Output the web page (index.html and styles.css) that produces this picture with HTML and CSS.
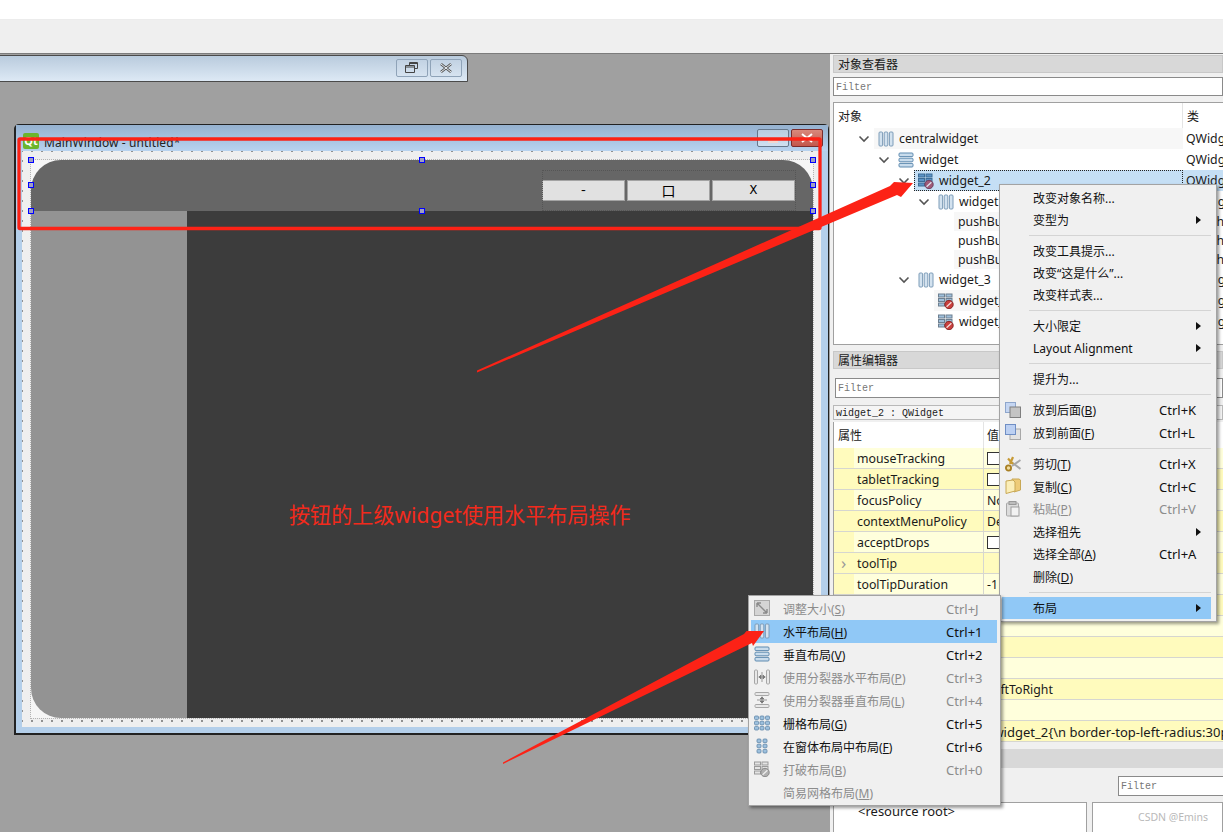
FILE: index.html
```html
<!DOCTYPE html>
<html lang="zh-CN">
<head>
    <meta charset="UTF-8">
    <title>Qt Designer</title>
    <link rel="stylesheet" href="styles.css">
</head>
<body>
    <svg class="icon-defs" width="0" height="0">
        <defs>
            <symbol id="i-hbox" viewBox="0 0 16 16">
                <rect x="1" y="1" width="3.6" height="14" rx="1" fill="#d3e2ef" stroke="#7d9cb8"/>
                <rect x="6.2" y="1" width="3.6" height="14" rx="1" fill="#d3e2ef" stroke="#7d9cb8"/>
                <rect x="11.4" y="1" width="3.6" height="14" rx="1" fill="#d3e2ef" stroke="#7d9cb8"/>
            </symbol>
            <symbol id="i-vbox" viewBox="0 0 16 16">
                <rect x="1" y="1" width="14" height="3.6" rx="1" fill="#c9dcec" stroke="#5f8bb0"/>
                <rect x="1" y="6.2" width="14" height="3.6" rx="1" fill="#c9dcec" stroke="#5f8bb0"/>
                <rect x="1" y="11.4" width="14" height="3.6" rx="1" fill="#c9dcec" stroke="#5f8bb0"/>
            </symbol>
            <symbol id="i-broken" viewBox="0 0 16 16">
                <rect x="0.5" y="1" width="6" height="3" fill="#9fc0dc" stroke="#6d7f90"/>
                <rect x="8" y="1" width="6" height="3" fill="#9fc0dc" stroke="#6d7f90"/>
                <rect x="0.5" y="5.5" width="6" height="3" fill="#9fc0dc" stroke="#6d7f90"/>
                <rect x="8" y="5.5" width="6" height="3" fill="#9fc0dc" stroke="#6d7f90"/>
                <rect x="0.5" y="10" width="6" height="3" fill="#9fc0dc" stroke="#6d7f90"/>
                <circle cx="11" cy="11.5" r="4.2" fill="#c9403e" stroke="#8a2626"/>
                <path d="M8.6 13.8 13.4 9.2" stroke="#f4dede" stroke-width="1.2"/>
            </symbol>
            <symbol id="i-broken-sel" viewBox="0 0 16 16">
                <rect x="0.5" y="1" width="6" height="3" fill="#5c93c6" stroke="#3d6c96"/>
                <rect x="8" y="1" width="6" height="3" fill="#5c93c6" stroke="#3d6c96"/>
                <rect x="0.5" y="5.5" width="6" height="3" fill="#5c93c6" stroke="#3d6c96"/>
                <rect x="8" y="5.5" width="6" height="3" fill="#5c93c6" stroke="#3d6c96"/>
                <rect x="0.5" y="10" width="6" height="3" fill="#5c93c6" stroke="#3d6c96"/>
                <circle cx="11" cy="11.5" r="4.2" fill="#a05a78" stroke="#6e4060"/>
                <path d="M8.6 13.8 13.4 9.2" stroke="#dfe6f2" stroke-width="1.2"/>
            </symbol>
            <symbol id="i-broken-off" viewBox="0 0 16 16">
                <rect x="0.5" y="1" width="6" height="3" fill="#e4e4e4" stroke="#9a9a9a"/>
                <rect x="8" y="1" width="6" height="3" fill="#e4e4e4" stroke="#9a9a9a"/>
                <rect x="0.5" y="5.5" width="6" height="3" fill="#e4e4e4" stroke="#9a9a9a"/>
                <rect x="8" y="5.5" width="6" height="3" fill="#e4e4e4" stroke="#9a9a9a"/>
                <rect x="0.5" y="10" width="6" height="3" fill="#e4e4e4" stroke="#9a9a9a"/>
                <circle cx="11" cy="11.5" r="4.2" fill="#b0b0b0" stroke="#8a8a8a"/>
                <path d="M8.6 13.8 13.4 9.2" stroke="#eeeeee" stroke-width="1.2"/>
            </symbol>
            <symbol id="i-adjust" viewBox="0 0 16 16">
                <rect x="0.5" y="0.5" width="15" height="15" fill="#d4d4d4" stroke="#a8a8a8"/>
                <path d="M3 3 13 13M3 3h4M3 3v4M13 13H9M13 13V9" fill="none" stroke="#8a8a8a" stroke-width="1.4"/>
            </symbol>
            <symbol id="i-hsplit" viewBox="0 0 16 16">
                <rect x="0.5" y="1" width="3" height="14" rx="1" fill="#e8e8e8" stroke="#a6a6a6"/>
                <rect x="12.5" y="1" width="3" height="14" rx="1" fill="#e8e8e8" stroke="#a6a6a6"/>
                <path d="M4.5 8h7M5 8l2-2v4zM11 8 9 6v4z" fill="#777" stroke="#777" stroke-width="0.8"/>
                <path d="M8 3v10" stroke="#999"/>
            </symbol>
            <symbol id="i-vsplit" viewBox="0 0 16 16">
                <rect x="1" y="0.5" width="14" height="3" rx="1" fill="#e8e8e8" stroke="#a6a6a6"/>
                <rect x="1" y="12.5" width="14" height="3" rx="1" fill="#e8e8e8" stroke="#a6a6a6"/>
                <path d="M8 4.5v7M8 5 6 7h4zM8 11 6 9h4z" fill="#777" stroke="#777" stroke-width="0.8"/>
                <path d="M3 8h10" stroke="#999"/>
            </symbol>
            <symbol id="i-grid" viewBox="0 0 16 16">
                <g fill="#9dc0dd" stroke="#5f86a8" stroke-width="0.8">
                    <rect x="0.5" y="1" width="4" height="3.6" rx="1"/><rect x="6" y="1" width="4" height="3.6" rx="1"/><rect x="11.5" y="1" width="4" height="3.6" rx="1"/>
                    <rect x="0.5" y="6.2" width="4" height="3.6" rx="1"/><rect x="6" y="6.2" width="4" height="3.6" rx="1"/><rect x="11.5" y="6.2" width="4" height="3.6" rx="1"/>
                    <rect x="0.5" y="11.4" width="4" height="3.6" rx="1"/><rect x="6" y="11.4" width="4" height="3.6" rx="1"/><rect x="11.5" y="11.4" width="4" height="3.6" rx="1"/>
                </g>
            </symbol>
            <symbol id="i-form" viewBox="0 0 16 16">
                <g fill="#9dc0dd" stroke="#5f86a8" stroke-width="0.8">
                    <rect x="3" y="1" width="4" height="3.6" rx="1"/><rect x="9" y="1" width="4" height="3.6" rx="1"/>
                    <rect x="3" y="6.2" width="4" height="3.6" rx="1"/><rect x="9" y="6.2" width="4" height="3.6" rx="1"/>
                    <rect x="3" y="11.4" width="4" height="3.6" rx="1"/><rect x="9" y="11.4" width="4" height="3.6" rx="1"/>
                </g>
            </symbol>
            <symbol id="i-back" viewBox="0 0 16 16">
                <rect x="0.5" y="0.5" width="10" height="10" fill="#c5d6f2" stroke="#8ea6cc"/>
                <rect x="5" y="5" width="10.5" height="10.5" fill="#c4c4c4" stroke="#7f7f7f"/>
            </symbol>
            <symbol id="i-front" viewBox="0 0 16 16">
                <rect x="5" y="5" width="10.5" height="10.5" fill="#e2e2e2" stroke="#a8a8a8"/>
                <rect x="0.5" y="0.5" width="10" height="10" fill="#bcd0f2" stroke="#6f8ec4"/>
            </symbol>
            <symbol id="i-cut" viewBox="0 0 16 16">
                <path d="M15.500 13 7 6.500M15.500 4 7 10" stroke="#a8a8a8" stroke-width="2"/>
                <path d="M3 2.500 8 8M8 1 5 8" fill="none" stroke="#c79a35" stroke-width="2.200"/>
                <circle cx="3.500" cy="12" r="2.600" fill="#f0dca0" stroke="#a87f24" stroke-width="1.800"/>
            </symbol>
            <symbol id="i-copy" viewBox="0 0 16 16">
                <path d="M7 1h7l1.500 1v10L9 14z" fill="#eecb78" stroke="#c8a855"/>
                <path d="M1 3l7-1 2 2v9l-9 2.500z" fill="#fbeeb8" stroke="#c8a855"/>
            </symbol>
            <symbol id="i-paste" viewBox="0 0 16 16">
                <rect x="1.500" y="2" width="12" height="13" rx="1" fill="#dcdcdc" stroke="#a8a8a8"/>
                <rect x="4" y="0.500" width="7" height="3" fill="#bdbdbd" stroke="#999"/>
                <rect x="6" y="6" width="8" height="9" fill="#f2f2f2" stroke="#9d9d9d"/>
            </symbol>
            <symbol id="i-chevron" viewBox="0 0 12 12">
                <path d="M1.500 3.500 6 8l4.500-4.500" fill="none" stroke="#555" stroke-width="1.600"/>
            </symbol>
        </defs>
    </svg>

    <div class="top-white"></div>
    <div class="top-bar"></div>

    <div class="workspace">
        <div class="mdi">
            <!-- minimized subwindow -->
            <div class="mini-window">
                <button class="mini-btn">
                    <svg width="16" height="12" viewBox="0 0 16 12"><path d="M5.500 3.500v-3h8v6h-3M1.500 3.500h9v7h-9z" fill="none" stroke="#444"/><path d="M1.500 5h9M5.500 1.500h8" stroke="#444"/></svg>
                </button>
                <button class="mini-btn">
                    <svg width="14" height="10" viewBox="0 0 14 10"><path d="M2 1l10 8M12 1 2 9" stroke="#555" stroke-width="2.600"/><path d="M2 1l10 8M12 1 2 9" stroke="#eef2f6" stroke-width="1"/></svg>
                </button>
            </div>

            <!-- form window -->
            <div class="form-window">
                <div class="form-title">
                    <span class="qt-logo">Qt</span>
                    <span class="form-title-text">MainWindow - untitled*</span>
                    <span class="win-btn win-min"><i class="min-bar"></i></span>
                    <span class="win-btn win-close">
                        <svg width="14" height="10" viewBox="0 0 14 10"><path d="M2 1l10 8M12 1 2 9" stroke="#fff" stroke-width="2"/></svg>
                    </span>
                </div>
                <div class="form-body">
                    <div class="central">
                        <div class="widget-top">
                            <div class="button-row">
                                <button class="form-btn">-</button>
                                <button class="form-btn btn-square">口</button>
                                <button class="form-btn">X</button>
                            </div>
                        </div>
                        <div class="widget-bottom">
                            <div class="widget-left"></div>
                            <div class="widget-right"></div>
                        </div>
                    </div>
                </div>
            </div>
        </div>

        <div class="dock">
            <div class="dock-title">对象查看器</div>
            <div class="filter filter-wide">Filter</div>

            <div class="tree">
                <div class="tree-head">
                    <span class="tree-col-name">对象</span>
                    <span class="tree-col-class">类</span>
                </div>
                <div class="tree-row depth-0 alt">
                    <div class="tree-name"><svg class="chevron"><use href="#i-chevron"/></svg><div class="tree-item"><svg class="tree-icon"><use href="#i-hbox"/></svg>centralwidget</div></div>
                    <div class="tree-class">QWidget</div>
                </div>
                <div class="tree-row depth-1">
                    <div class="tree-name"><svg class="chevron"><use href="#i-chevron"/></svg><div class="tree-item"><svg class="tree-icon"><use href="#i-vbox"/></svg>widget</div></div>
                    <div class="tree-class">QWidget</div>
                </div>
                <div class="tree-row depth-2 selected">
                    <div class="tree-name"><svg class="chevron"><use href="#i-chevron"/></svg><div class="tree-item"><svg class="tree-icon"><use href="#i-broken-sel"/></svg>widget_2</div></div>
                    <div class="tree-class">QWidget</div>
                </div>
                <div class="tree-row depth-3">
                    <div class="tree-name"><svg class="chevron"><use href="#i-chevron"/></svg><div class="tree-item"><svg class="tree-icon"><use href="#i-hbox"/></svg>widget</div></div>
                    <div class="tree-class">QWidget</div>
                </div>
                <div class="tree-row depth-4 short alt">
                    <div class="tree-name"><div class="tree-item">pushButton</div></div>
                    <div class="tree-class">QPushButton</div>
                </div>
                <div class="tree-row depth-4 short">
                    <div class="tree-name"><div class="tree-item">pushButton_2</div></div>
                    <div class="tree-class">QPushButton</div>
                </div>
                <div class="tree-row depth-4 short alt">
                    <div class="tree-name"><div class="tree-item">pushButton_3</div></div>
                    <div class="tree-class">QPushButton</div>
                </div>
                <div class="tree-row depth-2">
                    <div class="tree-name"><svg class="chevron"><use href="#i-chevron"/></svg><div class="tree-item"><svg class="tree-icon"><use href="#i-hbox"/></svg>widget_3</div></div>
                    <div class="tree-class">QWidget</div>
                </div>
                <div class="tree-row depth-3 leaf alt">
                    <div class="tree-name"><div class="tree-item"><svg class="tree-icon"><use href="#i-broken"/></svg>widget_4</div></div>
                    <div class="tree-class">QWidget</div>
                </div>
                <div class="tree-row depth-3 leaf">
                    <div class="tree-name"><div class="tree-item"><svg class="tree-icon"><use href="#i-broken"/></svg>widget_5</div></div>
                    <div class="tree-class">QWidget</div>
                </div>
            </div>

            <div class="dock-title dock-title-props">属性编辑器</div>
            <div class="filter filter-props">Filter</div>
            <div class="class-label">widget_2 : QWidget</div>

            <div class="props">
                <div class="props-head"><span class="prop-name-head">属性</span><span class="prop-value">值</span></div>
                <div class="prop-row light"><span class="prop-name">mouseTracking</span><span class="prop-value"><i class="check"></i></span></div>
                <div class="prop-row"><span class="prop-name">tabletTracking</span><span class="prop-value"><i class="check"></i></span></div>
                <div class="prop-row light"><span class="prop-name">focusPolicy</span><span class="prop-value">NoFocus</span></div>
                <div class="prop-row"><span class="prop-name">contextMenuPolicy</span><span class="prop-value">DefaultContextMenu</span></div>
                <div class="prop-row light"><span class="prop-name">acceptDrops</span><span class="prop-value"><i class="check"></i></span></div>
                <div class="prop-row"><span class="prop-name"><b class="expander">›</b>toolTip</span><span class="prop-value"></span></div>
                <div class="prop-row light"><span class="prop-name">toolTipDuration</span><span class="prop-value">-1</span></div>
                <div class="prop-row"><span class="prop-name">statusTip</span><span class="prop-value"></span></div>
                <div class="prop-row light"><span class="prop-name">whatsThis</span><span class="prop-value"></span></div>
                <div class="prop-row"><span class="prop-name">accessibleName</span><span class="prop-value"></span></div>
                <div class="prop-row light"><span class="prop-name">accessibleDescription</span><span class="prop-value"></span></div>
                <div class="prop-row"><span class="prop-name">layoutDirection</span><span class="prop-value">LeftToRight</span></div>
                <div class="prop-row light"><span class="prop-name">autoFillBackground</span><span class="prop-value"></span></div>
                <div class="prop-row"><span class="prop-name">styleSheet</span><span class="prop-value prop-value-long">#widget_2{\n border-top-left-radius:30px;</span></div>
            </div>

            <div class="dock-title dock-title-res"></div>
            <div class="res-bar"><div class="filter filter-res">Filter</div></div>
            <div class="res-boxes">
                <div class="res-box res-left">&lt;resource root&gt;</div>
                <div class="res-box res-right"></div>
            </div>
        </div>
    </div>

    <!-- context menu -->
    <div class="menu menu-main">
        <div class="menu-item tight"><span class="menu-label">改变对象名称...</span></div>
        <div class="menu-item tight"><span class="menu-label">变型为</span><i class="menu-arrow"></i></div>
        <div class="menu-sep"></div>
        <div class="menu-item tight"><span class="menu-label">改变工具提示...</span></div>
        <div class="menu-item tight"><span class="menu-label">改变“这是什么”...</span></div>
        <div class="menu-item tight"><span class="menu-label">改变样式表...</span></div>
        <div class="menu-sep"></div>
        <div class="menu-item tight"><span class="menu-label">大小限定</span><i class="menu-arrow"></i></div>
        <div class="menu-item tight"><span class="menu-label">Layout Alignment</span><i class="menu-arrow"></i></div>
        <div class="menu-sep"></div>
        <div class="menu-item tight"><span class="menu-label">提升为...</span></div>
        <div class="menu-sep"></div>
        <div class="menu-item"><svg class="menu-icon"><use href="#i-back"/></svg><span class="menu-label">放到后面(<u>B</u>)</span><span class="menu-key">Ctrl+K</span></div>
        <div class="menu-item"><svg class="menu-icon"><use href="#i-front"/></svg><span class="menu-label">放到前面(<u>F</u>)</span><span class="menu-key">Ctrl+L</span></div>
        <div class="menu-sep"></div>
        <div class="menu-item"><svg class="menu-icon"><use href="#i-cut"/></svg><span class="menu-label">剪切(<u>T</u>)</span><span class="menu-key">Ctrl+X</span></div>
        <div class="menu-item"><svg class="menu-icon"><use href="#i-copy"/></svg><span class="menu-label">复制(<u>C</u>)</span><span class="menu-key">Ctrl+C</span></div>
        <div class="menu-item off"><svg class="menu-icon"><use href="#i-paste"/></svg><span class="menu-label">粘贴(<u>P</u>)</span><span class="menu-key">Ctrl+V</span></div>
        <div class="menu-item"><span class="menu-label">选择祖先</span><i class="menu-arrow"></i></div>
        <div class="menu-item"><span class="menu-label">选择全部(<u>A</u>)</span><span class="menu-key">Ctrl+A</span></div>
        <div class="menu-item"><span class="menu-label">删除(<u>D</u>)</span></div>
        <div class="menu-sep"></div>
        <div class="menu-item active"><span class="menu-label">布局</span><i class="menu-arrow"></i></div>
    </div>

    <!-- layout submenu -->
    <div class="menu menu-layout">
        <div class="menu-item off"><svg class="menu-icon"><use href="#i-adjust"/></svg><span class="menu-label">调整大小(<u>S</u>)</span><span class="menu-key">Ctrl+J</span></div>
        <div class="menu-item active"><svg class="menu-icon"><use href="#i-hbox"/></svg><span class="menu-label">水平布局(<u>H</u>)</span><span class="menu-key">Ctrl+1</span></div>
        <div class="menu-item"><svg class="menu-icon"><use href="#i-vbox"/></svg><span class="menu-label">垂直布局(<u>V</u>)</span><span class="menu-key">Ctrl+2</span></div>
        <div class="menu-item off"><svg class="menu-icon"><use href="#i-hsplit"/></svg><span class="menu-label">使用分裂器水平布局(<u>P</u>)</span><span class="menu-key">Ctrl+3</span></div>
        <div class="menu-item off"><svg class="menu-icon"><use href="#i-vsplit"/></svg><span class="menu-label">使用分裂器垂直布局(<u>L</u>)</span><span class="menu-key">Ctrl+4</span></div>
        <div class="menu-item"><svg class="menu-icon"><use href="#i-grid"/></svg><span class="menu-label">栅格布局(<u>G</u>)</span><span class="menu-key">Ctrl+5</span></div>
        <div class="menu-item"><svg class="menu-icon"><use href="#i-form"/></svg><span class="menu-label">在窗体布局中布局(<u>F</u>)</span><span class="menu-key">Ctrl+6</span></div>
        <div class="menu-item off"><svg class="menu-icon"><use href="#i-broken-off"/></svg><span class="menu-label">打破布局(<u>B</u>)</span><span class="menu-key">Ctrl+0</span></div>
        <div class="menu-item off"><span class="menu-label">简易网格布局(<u>M</u>)</span></div>
    </div>

    <!-- selection handles -->
    <i class="handle h-tl"></i><i class="handle h-tc"></i><i class="handle h-tr"></i>
    <i class="handle h-ml"></i><i class="handle h-mr"></i>
    <i class="handle h-bl"></i><i class="handle h-bc"></i><i class="handle h-br"></i>

    <!-- red annotations -->
    <svg class="annotations" width="1223" height="832" viewBox="0 0 1223 832">
        <rect x="19" y="139" width="801" height="89.500" rx="1" fill="none" stroke="#fc2216" stroke-width="3.300"/>
        <polygon points="477,370.500 890,186 894,182 913,183 901,197 897,195 477,372.500" fill="#fc2216"/>
        <polygon points="503,762.500 744,634 746.500,631 764,631 753,646 752,643 503,764" fill="#fc2216"/>
    </svg>
    <div class="note">按钮的上级widget使用水平布局操作</div>
    <div class="watermark">CSDN @Emins</div>
</body>
</html>
```
FILE: styles.css
```css
* {
    box-sizing: border-box;
}

body {
    margin: 0;
    width: 1223px;
    height: 832px;
    position: relative;
    overflow: hidden;
    background-color: #f0f0f0;
    color: #1a1a1a;
    font-family: "Noto Sans", "Noto Sans CJK SC", sans-serif;
    font-size: 12.3px;
}

.icon-defs {
    position: absolute;
}

.top-white {
    height: 20px;
    background-color: #fff;
    border-bottom: 1px solid #ececec;
}

.top-bar {
    height: 34px;
    background-color: #efefef;
    border-bottom: 1px solid #7c7c7c;
}

.workspace {
    display: flex;
    height: 778px;
}

/* left mdi area */
.mdi {
    width: 830px;
    position: relative;
    background-color: #a0a0a0;
}

.mini-window {
    position: absolute;
    left: -10px;
    top: 1px;
    width: 478px;
    height: 27px;
    display: flex;
    justify-content: flex-end;
    align-items: center;
    gap: 2px;
    padding: 0 5px 2px 0;
    background: linear-gradient(#b9cbdd, #dde9f5);
    border: 1px solid #4a4a4a;
    border-top-right-radius: 6px;
}

.mini-btn {
    width: 32px;
    height: 18px;
    padding: 0;
    display: flex;
    align-items: center;
    justify-content: center;
    background: linear-gradient(#c2d2e3, #d6e3f0);
    border: 1px solid #8fa3b8;
    border-radius: 2px;
}

.form-window {
    position: absolute;
    left: 14px;
    top: 70px;
    width: 815px;
    height: 611px;
    display: flex;
    flex-direction: column;
    background-color: #b4cfea;
    border: 1px solid #222;
    border-left-width: 2px;
    border-bottom-width: 2px;
    border-top-left-radius: 5px;
    border-top-right-radius: 5px;
    padding: 0 7px 6px 6px;
}

.form-title {
    height: 26px;
    margin: 0 -7px 0 -6px;
    padding: 0 5px 0 7px;
    display: flex;
    align-items: center;
    background: linear-gradient(#95b1cf, #b8d3ef);
}

.qt-logo {
    width: 16px;
    height: 16px;
    margin-top: 6px;
    background-color: #6cb52d;
    border-radius: 2px;
    color: #fff;
    font-size: 11px;
    font-weight: bold;
    line-height: 16px;
    text-align: center;
}

.form-title-text {
    flex: 1;
    margin: 9px 0 0 5px;
    color: #222;
    font-size: 12px;
    letter-spacing: 0.1px;
}

.win-btn {
    width: 32px;
    height: 18px;
    margin-left: 2px;
    margin-top: -1px;
    display: flex;
    align-items: center;
    justify-content: center;
    border: 1px solid #66788c;
    border-radius: 2px;
}

.win-min {
    background: linear-gradient(#b8cde2, #cfe0f0);
}

.min-bar {
    width: 10px;
    height: 4px;
    margin-top: 6px;
    background-color: #f0d8d0;
}

.win-close {
    background: linear-gradient(#d9897c, #c4574c);
    border-color: #7a2c2c;
}

.form-body {
    flex: 1;
    padding: 9px 8px 9px 9px;
    background-color: #efefef;
    background-image: radial-gradient(#8e8e8e 0.7px, transparent 0.9px);
    background-size: 10px 10px;
    background-position: -5px -5px;
}

.central {
    height: 100%;
    display: flex;
    flex-direction: column;
    background-color: #f6f6f6;
    outline: 1px dotted #b4b4b4;
}

.widget-top {
    height: 51px;
    padding-top: 10px;
    display: flex;
    justify-content: flex-end;
    background-color: #666;
    border-radius: 30px 30px 0 0;
}

.button-row {
    display: flex;
    gap: 2px;
    height: 41px;
    padding: 10px 1px 0 0;
    margin-right: 17px;
    outline: 1px dotted #555;
    outline-offset: -1px;
}

.form-btn {
    width: 83px;
    height: 21px;
    padding: 0;
    background-color: #e1e1e1;
    border: 1px solid #a3a3a3;
    color: #000;
    font-family: "Liberation Mono", monospace;
    font-size: 13px;
}

.btn-square {
    font-family: "Noto Sans CJK SC", sans-serif;
    font-size: 14px;
    line-height: 19px;
}

.widget-bottom {
    flex: 1;
    display: flex;
}

.widget-left {
    width: 156px;
    background-color: #939393;
    border-bottom-left-radius: 30px;
}

.widget-right {
    flex: 1;
    background-color: #3c3c3c;
}

/* right dock */
.dock {
    width: 393px;
    padding: 1px 0 0 3px;
    overflow: hidden;
    background-color: #f0f0f0;
}

.dock-title {
    height: 18px;
    padding-left: 4px;
    background-color: #d8d8d8;
    border: 1px solid #c8c8c8;
    font-size: 12px;
    line-height: 18px;
}

.filter {
    height: 20px;
    padding-left: 2px;
    background-color: #fff;
    border: 1px solid #8a8a8a;
    color: #777;
    font-family: "Liberation Mono", monospace;
    font-size: 10px;
    line-height: 20px;
}

.filter-wide {
    margin-top: 4px;
    height: 19px;
}

.tree {
    height: 243px;
    margin-top: 6px;
    background-color: #fff;
    border: 1px solid #a0a0a0;
    border-right: none;
}

.tree-head {
    height: 25px;
    display: flex;
    font-size: 12px;
    line-height: 27px;
}

.tree-col-name {
    width: 349px;
    padding-left: 4px;
    border-right: 1px solid #e4e4e4;
}

.tree-col-class {
    padding-left: 4px;
}

.tree-row {
    height: 21px;
    display: flex;
    line-height: 21px;
}

.tree-row.short {
    height: 19px;
    line-height: 19px;
}

.tree-name {
    width: 349px;
    flex: none;
    display: flex;
    align-items: center;
}

.depth-0 .tree-name { padding-left: 24px; }
.depth-1 .tree-name { padding-left: 44px; }
.depth-2 .tree-name { padding-left: 64px; }
.depth-3 .tree-name { padding-left: 84px; }
.depth-4 .tree-name { padding-left: 120px; }
.depth-3.leaf .tree-name { padding-left: 100px; }

.chevron {
    width: 12px;
    height: 12px;
    margin-right: 4px;
    flex: none;
}

.tree-item {
    flex: 1;
    height: 100%;
    display: flex;
    align-items: center;
    padding-left: 4px;
}

.tree-icon {
    width: 16px;
    height: 16px;
    margin-right: 5px;
    flex: none;
}

.tree-class {
    padding-left: 3px;
    white-space: nowrap;
}

.alt .tree-item {
    background-color: #f7f7f7;
}

.selected .tree-item {
    background-color: #c5dff5;
    outline: 1px dotted #222;
    outline-offset: -1px;
}

.selected .tree-class {
    background-color: #c5dff5;
    flex: 1;
}

.dock-title-props {
    margin-top: 6px;
}

.filter-props {
    margin: 9px 0 0 2px;
}

.class-label {
    height: 15px;
    margin-top: 7px;
    padding-left: 2px;
    background-color: #f5f5f5;
    border: 1px solid #b9b9b9;
    color: #222;
    font-family: "Liberation Mono", monospace;
    font-size: 10px;
    line-height: 15px;
}

.props {
    margin-top: 2px;
    height: 320px;
    border-left: 1px solid #a0a0a0;
}

.props-head {
    height: 26px;
    display: flex;
    background-color: #fff;
    font-size: 12px;
    line-height: 27px;
}

.prop-name-head {
    width: 150px;
    padding-left: 4px;
    border-right: 1px solid #e4e4e4;
}

.prop-row {
    height: 21px;
    display: flex;
    background-color: #fffbbd;
    border-bottom: 1px solid #d6d6d0;
    line-height: 22px;
    white-space: nowrap;
}

.prop-name {
    width: 150px;
    flex: none;
    position: relative;
    padding-left: 23px;
    border-right: 1px solid #d6d6d0;
}

.prop-row.light .prop-name {
    background: linear-gradient(to right, #fffbbd 20px, #ffffdc 20px);
}

.prop-row.light {
    background-color: #ffffdc;
}

.prop-value {
    padding-left: 3px;
}

.prop-value-long {
    padding-left: 1px;
    font-size: 13px;
}

.expander {
    position: absolute;
    left: 7px;
    top: -1px;
    color: #999;
    font-size: 17px;
    font-weight: normal;
}

.check {
    display: block;
    width: 13px;
    height: 13px;
    margin-top: 4px;
    background-color: #fff;
    border: 1px solid #333;
}

.dock-title-res {
    margin: 7px 0 0 -3px;
    height: 19px;
    border: none;
}

.res-bar {
    height: 34px;
    padding: 8px 0 0 285px;
}

.filter-res {
    width: 120px;
}

.res-boxes {
    display: flex;
    gap: 5px;
}

.res-box {
    height: 40px;
    background-color: #fff;
    border: 1px solid #a0a0a0;
}

.res-left {
    width: 254px;
    padding-left: 24px;
    font-size: 13px;
    line-height: 16px;
}

.res-right {
    flex: 1;
}

/* menus float over the designer */
.menu {
    position: absolute;
    background-color: #f0f0f0;
    border: 1px solid #a3a3a3;
    box-shadow: 2px 2px 3px rgba(0, 0, 0, 0.4);
    font-size: 12px;
}

.menu-main {
    left: 999px;
    top: 184px;
    width: 218px;
    height: 438px;
    padding: 2px 5px 0 2px;
}

.menu-layout {
    left: 748px;
    top: 595px;
    width: 253px;
    height: 211px;
    padding: 1px 3px 0 2px;
}

.menu-item {
    display: flex;
    align-items: center;
    height: 22.6px;
    position: relative;
    padding-left: 31px;
    color: #111;
    white-space: nowrap;
}

.menu-item.tight {
    height: 22.2px;
}

.menu-layout .menu-item {
    height: 23px;
    padding-left: 32px;
}

.menu-icon {
    position: absolute;
    left: 3px;
    top: 3px;
    width: 16px;
    height: 16px;
}

.menu-label {
    flex: 1;
}

.menu-key {
    width: 52px;
    font-size: 13px;
}

.menu-layout .menu-key {
    width: 50px;
    margin-right: 1px;
}

.menu-arrow {
    margin-right: 10px;
    border-left: 5px solid #111;
    border-top: 4px solid transparent;
    border-bottom: 4px solid transparent;
}

.menu-item.off,
.menu-item.off .menu-key {
    color: #8c8c8c;
}

.menu-item.active {
    background-color: #90c8f6;
}

.menu-sep {
    height: 8.6px;
    margin-left: 27px;
    background: linear-gradient(#d4d4d4, #d4d4d4) center / 100% 1px no-repeat;
}

.handle {
    position: absolute;
    width: 6px;
    height: 6px;
    background-color: #a0a0c0;
    border: 1px solid #0000ff;
}

.h-tl { left: 28px; top: 157px; }
.h-tc { left: 419px; top: 157px; }
.h-tr { left: 810px; top: 157px; }
.h-ml { left: 28px; top: 182px; }
.h-mr { left: 810px; top: 182px; }
.h-bl { left: 28px; top: 208px; }
.h-bc { left: 419px; top: 208px; }
.h-br { left: 810px; top: 208px; }

.annotations {
    position: absolute;
    left: 0;
    top: 0;
}

.note {
    position: absolute;
    left: 289px;
    top: 500px;
    color: #f22a1c;
    font-size: 21.1px;
    line-height: 30px;
    white-space: nowrap;
}

.watermark {
    position: absolute;
    left: 1138px;
    top: 810px;
    color: #b9b9b9;
    font-size: 10.500px;
}
```
